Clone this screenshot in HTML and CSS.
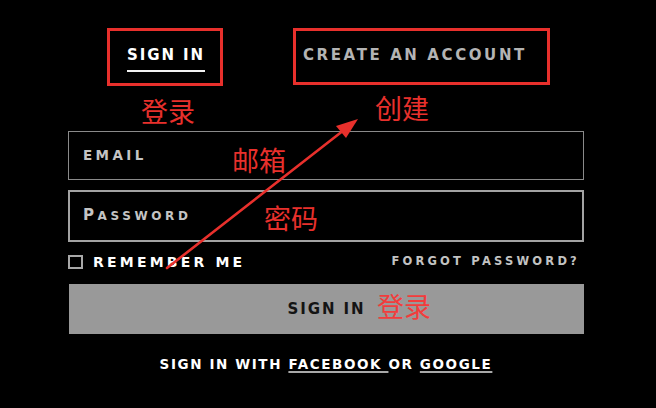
FILE: index.html
```html
<!DOCTYPE html>
<html lang="en">
<head>
<meta charset="utf-8">
<title>Sign in</title>
<link rel="stylesheet" href="styles.css">
</head>
<body>
<main class="page">
  <nav class="tabs">
    <div class="tab tab-active"><span class="tab-label">SIGN IN</span></div>
    <div class="tab tab-create"><span class="tab-text">CREATE AN ACCOUNT</span></div>
  </nav>
  <form class="form">
    <div class="field field-email"><span class="placeholder">EMAIL</span></div>
    <div class="field field-password"><span class="placeholder placeholder-sc">P<span class="sc">assword</span></span></div>
    <div class="options">
      <label class="remember"><span class="checkbox"></span><span class="remember-text">REMEMBER ME</span></label>
      <span class="forgot">FORGOT PASSWORD?</span>
    </div>
    <div class="submit"><span class="submit-text">SIGN IN</span></div>
    <p class="social">SIGN IN WITH <span class="link">FACEBOOK </span>OR <span class="link">GOOGLE</span></p>
  </form>

  <svg class="arrow" width="656" height="408" viewBox="0 0 656 408" aria-hidden="true">
    <line x1="167" y1="268" x2="344" y2="130" stroke="#e8302c" stroke-width="2.6" stroke-linecap="round"/>
    <polygon points="358,119 346,138 336,126" fill="#e8302c"/>
  </svg>
  <span class="note note-signin">登录</span>
  <span class="note note-create">创建</span>
  <span class="note note-email">邮箱</span>
  <span class="note note-password">密码</span>
  <span class="note note-button">登录</span>
</main>
</body>
</html>
```
FILE: styles.css
```css
* { box-sizing: border-box; }

html, body {
  margin: 0;
  padding: 0;
  background: #000;
}

.page {
  position: relative;
  width: 656px;
  height: 408px;
  padding-top: 28px;
  background: #000;
  font-family: "DejaVu Sans", "Liberation Sans", sans-serif;
  font-weight: 700;
  overflow: hidden;
}

/* Tabs */
.tabs {
  display: flex;
  align-items: flex-start;
  gap: 70px;
  margin-left: 107px;
}

.tab {
  border: 3px solid #e8302c;
  padding-top: 17px;
  font-size: 15px;
  line-height: 15px;
}

.tab-active {
  width: 116px;
  height: 58px;
  padding-left: 17px;
  color: #fff;
}

.tab-label {
  display: inline-block;
  letter-spacing: 1.9px;
  padding-bottom: 7px;
  border-bottom: 2px solid #f2f2f2;
}

.tab-create {
  width: 257px;
  height: 57px;
  padding-left: 7px;
  color: #b4b4b4;
}

.tab-text {
  letter-spacing: 2.6px;
}

/* Form */
.form {
  width: 516px;
  margin: 45px 0 0 68px;
}

.field {
  display: flex;
  align-items: center;
  width: 516px;
}

.field-email {
  height: 49px;
  border: 1px solid #8a8a8a;
  padding-left: 14px;
}

.field-password {
  height: 52px;
  margin-top: 10px;
  border: 2px solid #a3a3a3;
  padding-left: 13px;
}

.placeholder {
  color: #c4c4c4;
  font-size: 13.5px;
  line-height: 13.5px;
  letter-spacing: 3.4px;
}

.placeholder-sc {
  font-size: 15px;
  line-height: 15px;
  letter-spacing: 3.6px;
}

.sc {
  font-size: 12px;
  text-transform: uppercase;
  letter-spacing: 3.6px;
}

.options {
  display: flex;
  align-items: center;
  justify-content: space-between;
  height: 14px;
  margin-top: 13px;
  padding-right: 4px;
}

.remember {
  display: flex;
  align-items: center;
}

.checkbox {
  width: 15px;
  height: 14px;
  border: 2px solid #a8a8a8;
}

.remember-text {
  margin-left: 10px;
  color: #fff;
  font-size: 14px;
  line-height: 14px;
  letter-spacing: 3.2px;
}

.forgot {
  color: #c2c2c2;
  font-size: 11.5px;
  line-height: 11.5px;
  letter-spacing: 3.2px;
}

.submit {
  display: flex;
  align-items: center;
  justify-content: center;
  height: 50px;
  margin: 15px 0 0 1px;
  background: #999;
}

.submit-text {
  color: #141414;
  font-size: 15px;
  line-height: 15px;
  letter-spacing: 1.9px;
}

.social {
  margin: 23.5px 0 0;
  text-align: center;
  color: #fff;
  font-size: 13.5px;
  line-height: 13.5px;
  letter-spacing: 1.6px;
}

.link {
  text-decoration: underline;
  text-decoration-color: #a8a8a8;
  text-decoration-thickness: 2px;
  text-underline-offset: 2px;
}

/* Annotation overlays */
.arrow {
  position: absolute;
  left: 0;
  top: 0;
  pointer-events: none;
}

.note {
  position: absolute;
  font-family: "Noto Sans CJK SC", sans-serif;
  font-weight: 400;
  font-size: 27px;
  line-height: 27px;
  color: #e8302c;
}

.note-signin { left: 141px; top: 97px; }
.note-create { left: 375px; top: 94px; }
.note-email { left: 232px; top: 146px; }
.note-password { left: 264px; top: 204px; }
.note-button { left: 377px; top: 292px; color: #f23c3c; }
```
